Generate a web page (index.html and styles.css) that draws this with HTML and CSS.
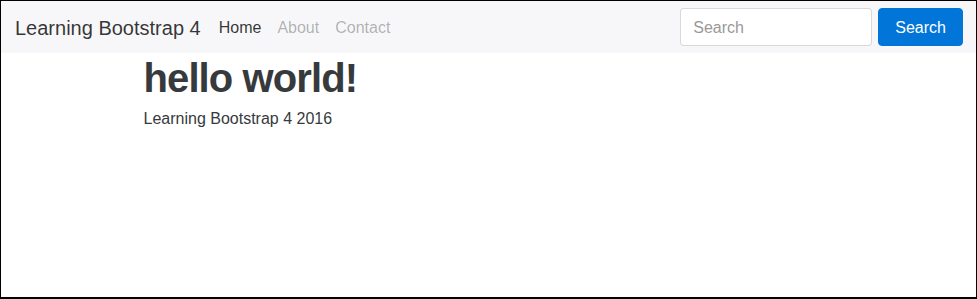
FILE: index.html
```html
<!DOCTYPE html>
<html lang="en">
<head>
<meta charset="utf-8">
<title>Learning Bootstrap 4</title>
<link rel="stylesheet" href="styles.css">
</head>
<body>
<div class="frame">
  <nav class="navbar">
    <a class="brand" href="#">Learning Bootstrap 4</a>
    <ul class="nav">
      <li><a class="nav-link active" href="#">Home</a></li>
      <li><a class="nav-link" href="#">About</a></li>
      <li><a class="nav-link" href="#">Contact</a></li>
    </ul>
    <form class="search">
      <input class="search-input" type="text" placeholder="Search">
      <button class="search-btn" type="button">Search</button>
    </form>
  </nav>
  <main class="container">
    <h1 class="title">hello world!</h1>
    <p class="lead">Learning Bootstrap 4 2016</p>
  </main>
</div>
</body>
</html>
```

FILE: styles.css
```css
* { box-sizing: border-box; }

html, body {
  margin: 0;
  padding: 0;
  background: #fff;
}

body {
  font-family: "Liberation Sans", Arial, Helvetica, sans-serif;
  font-size: 16px;
  line-height: 1.5;
  color: #373a3c;
}

.frame {
  width: 977px;
  height: 299px;
  border: 1px solid #000;
  border-bottom-width: 2px;
  overflow: hidden;
}

.navbar {
  display: flex;
  align-items: center;
  height: 52px;
  padding: 7px 13px 7px 14px;
  background: #f7f7f9;
}

.brand {
  font-size: 20px;
  line-height: 30px;
  padding: 5px 0 3px;
  margin-right: 18px;
  color: rgba(0, 0, 0, 0.8);
  text-decoration: none;
}

.nav {
  display: flex;
  gap: 16px;
  list-style: none;
  margin: 0;
  padding: 1px 0 0;
}

.nav-link {
  display: block;
  line-height: 24px;
  color: rgba(0, 0, 0, 0.3);
  text-decoration: none;
}

.nav-link.active {
  color: rgba(0, 0, 0, 0.8);
}

.search {
  margin-left: auto;
  display: flex;
  gap: 6px;
}

.search-input {
  width: 192px;
  height: 38px;
  padding: 9px 12px 7px;
  font-family: inherit;
  font-size: 16px;
  line-height: 20px;
  color: #55595c;
  background: #fff;
  border: 1px solid rgba(0, 0, 0, 0.15);
  border-radius: 4px;
  outline: none;
}

.search-input::placeholder {
  color: #999;
  opacity: 1;
}

.search-btn {
  height: 38px;
  padding: 9px 16px 7px;
  font-family: inherit;
  font-size: 16px;
  line-height: 20px;
  color: #fff;
  background: #0275d8;
  border: 1px solid #0275d8;
  border-radius: 4px;
}

.container {
  width: 720px;
  margin: 0 auto;
  padding: 3px 15px 0;
}

.title {
  margin: 0 0 7px;
  font-size: 40px;
  line-height: 1.1;
  font-weight: 700;
  letter-spacing: -0.9px;
}

.lead {
  margin: 0;
}
```
